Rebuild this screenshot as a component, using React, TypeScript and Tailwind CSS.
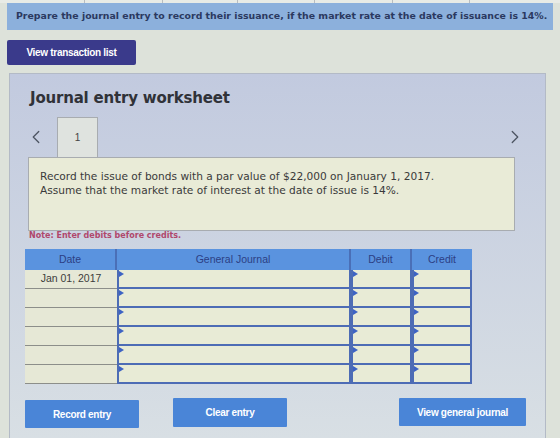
import { ChevronLeft, ChevronRight } from 'lucide-react';

const rows = ['Jan 01, 2017', '', '', '', '', ''];

// small blue flag drawn in the corner of each entry cell
const Flag = () => (
  <span className="absolute left-0 top-[1px] h-0 w-0 border-y-[3px] border-l-[5px] border-y-transparent border-l-[#3d63c4]" />
);

const InputCell = ({ w }: { w: string }) => (
  <div className={`relative ${w} h-full border-x-2 border-b-2 border-[#4d6cb5] bg-[#e8ebd6]`}>
    <Flag />
  </div>
);

const App = () => {
  return (
    <div className="flex h-[438px] w-[560px] flex-col overflow-hidden bg-[#dde2da] font-['DejaVu_Sans',sans-serif]">
      {/* tab strip above the banner */}
      <div className="flex h-[3px] bg-[#e8ebe6]">
        {[85, 78, 75, 77, 78, 77].map((w, i) => (
          <div key={i} style={{ width: w }} className="border-r border-[#b8bcc0]" />
        ))}
      </div>

      <div className="mx-[7px] flex h-[27px] items-center bg-[#8cb0dc] pl-[9px] text-[9.4px] font-semibold text-[#2b3960]">
        Prepare the journal entry to record their issuance, if the market rate at the date of issuance is 14%.
      </div>

      <button className="ml-[7px] mt-[10px] flex h-[25px] w-[129px] items-center justify-center rounded-[2px] bg-[#3a3a8b] text-[10px] font-semibold tracking-[-0.3px] text-white font-['Liberation_Sans',sans-serif]">
        View transaction list
      </button>

      <div className="ml-[9px] mt-[8px] flex w-[537px] flex-1 flex-col border border-b-0 border-[#b3bac6] bg-gradient-to-b from-[#c2cadf] to-[#d8dfe4]">
        <h2 className="pl-[20px] pt-[14px] text-[15px] font-bold leading-[20px] tracking-[-0.2px] text-[#303238]">
          Journal entry worksheet
        </h2>

        <div className="mt-[9px] flex h-[40px] items-center">
          <ChevronLeft className="ml-[15px] mr-[10px] text-[#4d5462]" size={22} strokeWidth={1.4} />
          <div className="flex h-full w-[41px] items-center justify-center self-end border border-b-0 border-[#a8acb0] bg-[#dfe3df] text-[10px] text-[#444] font-['Liberation_Sans',sans-serif]">
            1
          </div>
          <ChevronRight className="ml-auto mr-[19px] text-[#4d5462]" size={22} strokeWidth={1.4} />
        </div>

        <div className="ml-[18px] h-[74px] w-[487px] border border-[#a8acb0] bg-[#e9ebd7] pl-[11px] pt-[11px] text-[10.6px] leading-[14px] text-[#3a3a3a]">
          <p>Record the issue of bonds with a par value of $22,000 on January 1, 2017.</p>
          <p>Assume that the market rate of interest at the date of issue is 14%.</p>
        </div>

        <p className="ml-[19px] mt-0 text-[8px] font-semibold leading-[10px] text-[#b0486c]">Note: Enter debits before credits.</p>

        <div className="ml-[15px] mt-[8px] w-[447px] font-['Liberation_Sans',sans-serif] text-[10.5px]">
          <div className="flex h-[21px] bg-[#5a93df] text-[#2c3f84]">
            <div className="flex w-[92px] items-center justify-center border-r-2 border-[#4a6fb7]">Date</div>
            <div className="flex w-[234px] items-center justify-center border-r-2 border-[#4a6fb7]">General Journal</div>
            <div className="flex w-[61px] items-center justify-center border-r-2 border-[#4a6fb7]">Debit</div>
            <div className="flex w-[60px] items-center justify-center">Credit</div>
          </div>
          {rows.map((d, i) => (
            <div key={i} className="flex h-[19px]">
              <div className="flex w-[92px] items-center justify-center border-b border-[#8c8e8a] bg-[#e6e8d6] text-[#3c3c3c]">
                {d}
              </div>
              <InputCell w="w-[234px]" />
              <InputCell w="w-[61px]" />
              <InputCell w="w-[60px]" />
            </div>
          ))}
        </div>

        <div className="mt-[14px] flex items-start font-['Liberation_Sans',sans-serif] text-[10px] font-bold tracking-[-0.3px] text-white">
          <button className="ml-[15px] mt-[2px] h-[28px] w-[114px] rounded-[1px] bg-[#4a85d7]">Record entry</button>
          <button className="ml-[34px] h-[29px] w-[114px] rounded-[1px] bg-[#4a85d7]">Clear entry</button>
          <button className="ml-[112px] h-[28px] w-[127px] rounded-[1px] bg-[#4a85d7]">View general journal</button>
        </div>
      </div>
    </div>
  );
};

export default App;
